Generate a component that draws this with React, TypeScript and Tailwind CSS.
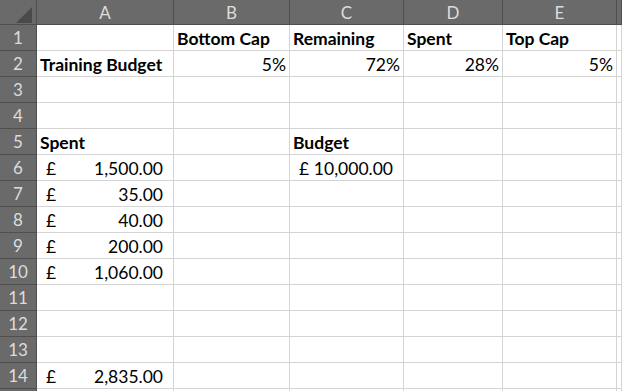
type Cell = { text?: string; bold?: boolean; align?: "left" | "right"; money?: boolean };

const cols = ["A", "B", "C", "D", "E", ""];

const rows: Cell[][] = [
  [{}, { text: "Bottom Cap", bold: true }, { text: "Remaining", bold: true }, { text: "Spent", bold: true }, { text: "Top Cap", bold: true }],
  [{ text: "Training Budget", bold: true }, { text: "5%", align: "right" }, { text: "72%", align: "right" }, { text: "28%", align: "right" }, { text: "5%", align: "right" }],
  [],
  [],
  [{ text: "Spent", bold: true }, {}, { text: "Budget", bold: true }],
  [{ text: "1,500.00", money: true }, {}, { text: "10,000.00", money: true }],
  [{ text: "35.00", money: true }],
  [{ text: "40.00", money: true }],
  [{ text: "200.00", money: true }],
  [{ text: "1,060.00", money: true }],
  [],
  [],
  [],
  [{ text: "2,835.00", money: true }],
  [],
];

const gridCols = "grid grid-cols-[37px_137px_116px_114px_99px_114px_1fr]";

function DataCell({ cell }: { cell?: Cell }) {
  const base = "h-[26px] border-r border-b border-[#d4d4d4] bg-white text-black text-[17.5px] leading-none flex items-end pb-[3px] whitespace-nowrap";
  if (!cell || !cell.text) return <div className={base} />;
  if (cell.money) {
    return (
      <div className={`${base} justify-between pl-[9px] pr-[10px]`}>
        <span>£</span>
        <span>{cell.text}</span>
      </div>
    );
  }
  return (
    <div
      className={`${base} ${cell.align === "right" ? "justify-end pr-[3px]" : "justify-start pl-[3px]"} ${cell.bold ? "font-bold" : ""}`}
    >
      {cell.text}
    </div>
  );
}

export default function App() {
  return (
    <div className="w-[622px] h-[391px] overflow-hidden bg-white font-['Lato','Liberation_Sans',sans-serif]">
      <div className={`${gridCols} h-[25px] bg-[#6a6a6a] border-b border-[#4f4f4f]`}>
        <div className="relative border-r border-[#4f4f4f]">
          <svg className="absolute right-[4px] bottom-[3px]" width="16" height="16" viewBox="0 0 16 16">
            <polygon points="16,0 16,16 0,16" fill="#4a4a4a" />
          </svg>
        </div>
        {cols.map((c, i) => (
          <div
            key={i}
            className="border-r border-[#4f4f4f] flex items-center justify-center text-[17px] text-[#dcdcdc]"
          >
            {c}
          </div>
        ))}
      </div>
      {rows.map((row, r) => (
        <div key={r} className={gridCols}>
          <div className="h-[26px] bg-[#6a6a6a] border-r border-b border-[#4f4f4f] flex items-center justify-center text-[17px] text-[#dcdcdc]">
            {r < 14 ? r + 1 : ""}
          </div>
          {[0, 1, 2, 3, 4, 5].map((c) => (
            <DataCell key={c} cell={row[c]} />
          ))}
        </div>
      ))}
    </div>
  );
}
